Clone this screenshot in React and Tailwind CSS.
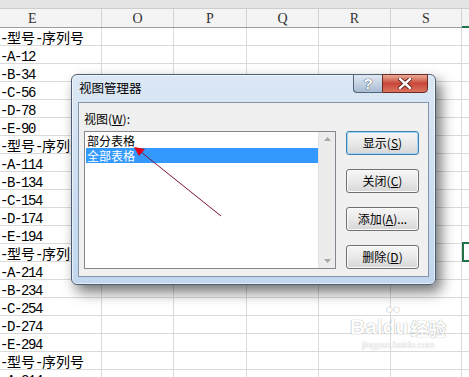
import React from 'react'

const rows = [
  '-型号-序列号', '-A-12', '-B-34', '-C-56', '-D-78', '-E-90',
  '-型号-序列号', '-A-114', '-B-134', '-C-154', '-D-174', '-E-194',
  '-型号-序列号', '-A-214', '-B-234', '-C-254', '-D-274', '-E-294',
  '-型号-序列号', '-A-314',
]

const cols = [
  { key: 'E', w: 'w-[102px]', head: 'justify-start pl-[28px]' },
  { key: 'O', w: 'w-[72px]', head: 'justify-center' },
  { key: 'P', w: 'w-[73px]', head: 'justify-center' },
  { key: 'Q', w: 'w-[72px]', head: 'justify-center' },
  { key: 'R', w: 'w-[72px]', head: 'justify-center' },
  { key: 'S', w: 'w-[71px]', head: 'justify-center' },
]

// ascii runs get squeezed to the half-width of the cjk glyphs
function CellText({ s }) {
  const parts = s.match(/[\x00-\x7f]+|[^\x00-\x7f]+/g) || []
  return parts.map((p, i) =>
    /^[\x00-\x7f]/.test(p)
      ? <span key={i} className="tracking-[-1.4px]">{p}</span>
      : <span key={i}>{p}</span>
  )
}

function Sheet() {
  return (
    <div className="flex flex-col">
      <div className="h-[9px] bg-[#e4e4e4] border-b border-[#cdcdcd]" />
      <div className="flex h-[19px] bg-[#f4f4f4] border-b border-[#9e9e9e] font-['Liberation_Serif',serif] text-[14px] text-[#333]">
        {cols.map((c) => (
          <div key={c.key} className={`${c.w} flex items-center border-r border-[#d4d4d4] ${c.head}`}>{c.key}</div>
        ))}
        <div className="flex-1 border-b-2 border-[#217346] -mb-px" />
      </div>
      {rows.map((r, i) => (
        <div key={i} className="flex h-[18px] shrink-0">
          {cols.map((c, j) => (
            <div key={c.key} className={`${c.w} h-[18px] border-b border-r border-[#dadada]`}>
              {j === 0 && (
                <div className="pt-[4px] leading-[14px] whitespace-nowrap text-[14px] text-black font-['Liberation_Mono','Noto_Sans_CJK_SC',monospace]">
                  <CellText s={r} />
                </div>
              )}
            </div>
          ))}
          <div className="flex-1 h-[18px] border-b border-[#dadada] relative">
            {i === 12 && <div className="absolute -top-[2px] -bottom-[1px] left-0 right-[-4px] border-2 border-[#217346]" />}
          </div>
        </div>
      ))}
    </div>
  )
}

function WinButton({ children, primary }) {
  return (
    <div
      className={`h-[24px] w-[73px] rounded-[3px] flex items-center justify-center text-[12px] text-black bg-gradient-to-b from-[#f6f6f6] via-[#e9e9e9] to-[#d6d6d6] ${
        primary
          ? 'border border-[#3c7fb1] shadow-[inset_0_0_0_1px_#9fd7f3]'
          : 'border border-[#707070] shadow-[inset_0_0_0_1px_#fbfbfb]'
      }`}
    >
      {children}
    </div>
  )
}

function Dialog() {
  return (
    <div className="absolute left-[71px] top-[74px] w-[365px] h-[211px] rounded-[6px] border border-[#4b5d72] bg-gradient-to-b from-[#dbe7f4] via-[#cddff1] to-[#c2d7ee] shadow-[5px_7px_14px_rgba(0,0,0,0.55),inset_0_0_0_1px_rgba(255,255,255,0.6)] font-['Noto_Sans_CJK_SC',sans-serif] text-[12px]">
      <div className="h-[27px] flex items-start">
        <div className="pl-[7px] pt-[5px] leading-[16px] text-[12.5px] text-black">视图管理器</div>
        <div className="ml-auto mr-[7px] -mt-px flex">
          <div className="w-[29px] h-[19px] rounded-bl-[4px] border border-[#52637a] border-r-0 bg-gradient-to-b from-[#dfe7f1] via-[#c6d3e3] to-[#a8bbd2] flex items-center justify-center">
            <span className="text-[15px] font-bold text-white leading-none font-['Liberation_Sans',sans-serif] [text-shadow:0_0_1px_#33475e,0_0_1px_#33475e]">?</span>
          </div>
          <div className="w-[46px] h-[19px] rounded-br-[4px] border border-[#6b2a22] bg-gradient-to-b from-[#e9a998] via-[#c9473a] to-[#d9735f] flex items-center justify-center">
            <svg width="14" height="11" viewBox="0 0 14 11">
              <path d="M2 1 L12 10 M12 1 L2 10" stroke="#5a1a12" strokeWidth="4.2" strokeLinecap="square" />
              <path d="M2 1 L12 10 M12 1 L2 10" stroke="#ffffff" strokeWidth="2.4" strokeLinecap="square" />
            </svg>
          </div>
        </div>
      </div>
      <div className="mx-[6px] h-[175px] bg-[#f0f0f0] border border-[#8295ab] flex">
        <div className="pl-[5px] pt-[8px] flex flex-col">
          <div className="leading-[16px] text-black">视图(<span className="underline">W</span>):</div>
          <div className="mt-[4px] w-[252px] h-[138px] bg-white border border-[#828790] flex">
            <div className="flex-1 pt-px pl-px">
              <div className="h-[15px] leading-[15px] pl-[1px] text-black overflow-hidden">部分表格</div>
              <div className="h-[15px] leading-[15px] pl-[1px] bg-[#3399ff] text-white overflow-hidden">全部表格</div>
            </div>
            <div className="w-[17px] bg-[#ececec] border-l border-[#e2e2e2] flex flex-col items-center justify-between py-[5px]">
              <svg width="7" height="4" viewBox="0 0 7 4"><path d="M0 4 L3.5 0 L7 4 Z" fill="#a7a7a7" /></svg>
              <svg width="7" height="4" viewBox="0 0 7 4"><path d="M0 0 L3.5 4 L7 0 Z" fill="#a7a7a7" /></svg>
            </div>
          </div>
        </div>
        <div className="ml-[10px] pt-[28px] flex flex-col gap-[14px]">
          <WinButton primary>显示(<span className="underline">S</span>)</WinButton>
          <WinButton>关闭(<span className="underline">C</span>)</WinButton>
          <WinButton>添加(<span className="underline">A</span>)...</WinButton>
          <WinButton>删除(<span className="underline">D</span>)</WinButton>
        </div>
      </div>
    </div>
  )
}

export default function App() {
  return (
    <div className="relative w-[469px] h-[377px] overflow-hidden bg-white">
      <Sheet />
      <Dialog />
      <svg className="absolute inset-0 pointer-events-none" width="469" height="377">
        <line x1="221" y1="216" x2="141" y2="152" stroke="#7a1530" strokeWidth="1" />
        <path d="M134 147 L145 149 L139 156 Z" fill="#e0001b" />
      </svg>
      <div className="absolute left-[350px] top-[316px] flex flex-col items-center pointer-events-none opacity-80">
        <div className="flex items-end font-['Liberation_Sans',sans-serif] font-bold text-[21px] leading-none text-white [text-shadow:0_0_1px_#9a9a9a,0_0_1px_#9a9a9a]">
          <span>Bai</span>
          <span className="relative">
            <span className="absolute -top-[13px] left-[3px] text-[12px]">●●</span>
            du
          </span>
          <span className="ml-[2px] text-[18px] font-['Noto_Sans_CJK_SC',sans-serif]">经验</span>
        </div>
        <div className="mt-[4px] text-[9px] leading-none text-white font-['Liberation_Sans',sans-serif] [text-shadow:0_0_1px_#9a9a9a]">jingyan.baidu.com</div>
      </div>
    </div>
  )
}
